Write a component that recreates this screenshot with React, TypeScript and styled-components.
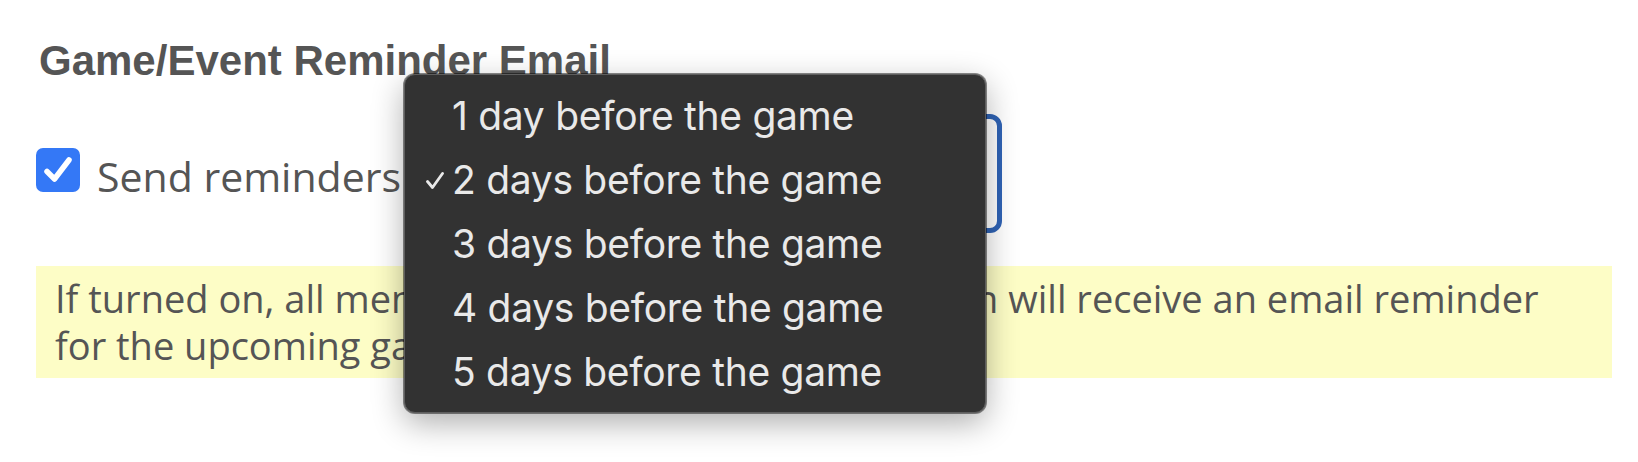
import React from "react";
import styled, { createGlobalStyle } from "styled-components";

const GlobalStyle = createGlobalStyle`
  html, body { margin: 0; padding: 0; background: #ffffff; }
  * { box-sizing: border-box; }
`;

const Page = styled.div`
  position: relative;
  width: 1638px;
  height: 462px;
  padding: 37px 26px 0 36px;
  overflow: hidden;
`;

const Heading = styled.h2`
  margin: 0 0 0 3px;
  font-family: "Liberation Sans", Arial, sans-serif;
  font-weight: 700;
  font-size: 42px;
  line-height: 48px;
  color: #555555;
`;

const Row = styled.div`
  display: flex;
  align-items: center;
  width: 966px;
  height: 119px;
  margin-top: 29px;
`;

const CheckBox = styled.span`
  flex: 0 0 44px;
  width: 44px;
  height: 44px;
  margin-bottom: 7px;
  border-radius: 7px;
  background: #3478f6;
  display: flex;
  align-items: center;
  justify-content: center;
`;

const Label = styled.span`
  margin-left: 17px;
  padding-top: 4px;
  font-family: "Open Sans", "Noto Sans", sans-serif;
  font-size: 41px;
  color: #555555;
  white-space: nowrap;
`;

const Select = styled.div`
  flex: 1;
  margin-left: 24px;
  height: 119px;
  border: 5px solid #2f63b5;
  border-radius: 12px;
  background: #ffffff;
  display: flex;
  align-items: center;
  padding-left: 24px;
  font-family: "Open Sans", "Noto Sans", sans-serif;
  font-size: 38px;
  color: #555555;
`;

const Note = styled.p`
  margin: 33px 0 0 0;
  background: #fdfdc6;
  padding: 9px 19px 10px 19px;
  font-family: "Open Sans", "Noto Sans", sans-serif;
  font-size: 38px;
  line-height: 46.7px;
  color: #555555;
  white-space: nowrap;
`;

const Menu = styled.ul`
  position: absolute;
  left: 404px;
  top: 74px;
  width: 582px;
  height: 339px;
  margin: 0;
  padding: 9px 0;
  list-style: none;
  background: #323232;
  border: 1px solid #5e5e5e;
  border-radius: 11px;
  box-shadow: 0 0 0 1px rgba(0, 0, 0, 0.45), 0 10px 32px rgba(0, 0, 0, 0.32);
`;

const Item = styled.li`
  display: flex;
  align-items: center;
  height: 64px;
  padding-left: 21px;
  font-family: Inter, "Liberation Sans", sans-serif;
  font-size: 39px;
  letter-spacing: -0.3px;
  line-height: 64px;
  color: #e9e9e9;
  white-space: nowrap;
`;

const CheckSlot = styled.span`
  flex: 0 0 26px;
  width: 26px;
  height: 64px;
  display: flex;
  align-items: center;
  padding-top: 1px;
`;

const options = [
  "1 day before the game",
  "2 days before the game",
  "3 days before the game",
  "4 days before the game",
  "5 days before the game",
];

export default function App() {
  return (
    <>
      <GlobalStyle />
      <Page>
        <Heading>Game/Event Reminder Email</Heading>
        <Row>
          <CheckBox>
            <svg width="30" height="28" viewBox="0 0 30 28">
              <path
                d="M4 15.5 L11.5 23 L26 4"
                fill="none"
                stroke="#ffffff"
                strokeWidth="5.5"
                strokeLinecap="round"
                strokeLinejoin="round"
              />
            </svg>
          </CheckBox>
          <Label>Send reminders</Label>
          <Select>2 days before the game</Select>
        </Row>
        <Note>
          If turned on, all members of the team or organization will receive an email reminder
          <br />
          for the upcoming game/event.
        </Note>
        <Menu>
          {options.map((o, i) => (
            <Item key={o}>
              <CheckSlot>
                {i === 1 && (
                  <svg width="18" height="17" viewBox="0 0 18 17">
                    <path
                      d="M1.5 9.5 L6.5 15.5 L16.5 1.5"
                      fill="none"
                      stroke="#e9e9e9"
                      strokeWidth="2.8"
                      strokeLinecap="round"
                      strokeLinejoin="round"
                    />
                  </svg>
                )}
              </CheckSlot>
              {o}
            </Item>
          ))}
        </Menu>
      </Page>
    </>
  );
}
